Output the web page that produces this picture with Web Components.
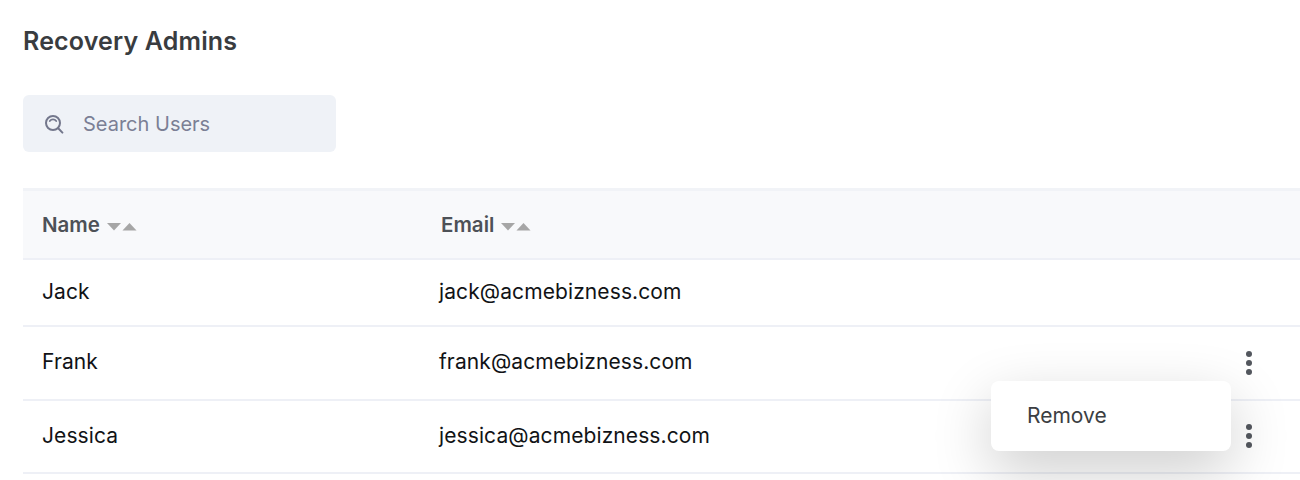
<!DOCTYPE html>
<html lang="en">
<head>
<meta charset="utf-8">
<title>Recovery Admins</title>
<style>
  html, body { margin: 0; background: #fff; overflow: hidden; }
  body { font-family: Inter, "Liberation Sans", sans-serif; height: 480px; }
</style>
</head>
<body>
<admins-page>
  <admin-row name="Jack" email="jack@acmebizness.com" height="67"></admin-row>
  <admin-row name="Frank" email="frank@acmebizness.com" height="74" more open></admin-row>
  <admin-row name="Jessica" email="jessica@acmebizness.com" height="73" more></admin-row>
</admins-page>

<script>
const pageTemplate = document.createElement('template');
pageTemplate.innerHTML = `
  <style>
    :host { display: block; padding: 26px 0 0 23px; }
    h1 {
      margin: 0;
      font-size: 25px;
      line-height: 30px;
      letter-spacing: .15px;
      font-weight: 600;
      color: #393c40;
    }
    search-box { margin-top: 39px; }
    .table { margin-top: 36px; }
    .head {
      display: grid;
      grid-template-columns: 418px 1fr;
      height: 67px;
      align-items: center;
      background: #f8f9fb;
      border-top: 3px solid #f1f3f7;
      border-bottom: 2px solid #eef0f6;
      color: #4d5157;
      font-size: 20.500px;
      font-weight: 600;
    }
    sort-head:first-child { padding-left: 19px; }
  </style>
  <h1>Recovery Admins</h1>
  <search-box placeholder="Search Users"></search-box>
  <div class="table">
    <div class="head">
      <sort-head>Name</sort-head>
      <sort-head>Email</sort-head>
    </div>
    <slot></slot>
  </div>
`;

class AdminsPage extends HTMLElement {
  constructor () {
    super();
    this.attachShadow({ mode: 'open' });
    this.shadowRoot.appendChild(pageTemplate.content.cloneNode(true));
  }
}

const searchTemplate = document.createElement('template');
searchTemplate.innerHTML = `
  <style>
    :host {
      display: flex;
      align-items: center;
      box-sizing: border-box;
      width: 313px;
      height: 57px;
      padding-left: 21px;
      gap: 19px;
      background: #eff2f7;
      border-radius: 6px;
      color: #7b7f95;
      font-size: 20px;
    }
    svg { display: block; flex: none; }
  </style>
  <svg width="20" height="20" viewBox="0 0 20 20" fill="none" stroke="#73778c" stroke-width="2" stroke-linecap="round">
    <circle cx="9" cy="9" r="7"/>
    <path d="M5.800 7a4 4 0 0 1 6.400 0" stroke-width="1.800"/>
    <path d="M14.200 14.200 18.400 18.600"/>
  </svg>
  <span class="label"></span>
`;

class SearchBox extends HTMLElement {
  constructor () {
    super();
    this.attachShadow({ mode: 'open' });
    this.shadowRoot.appendChild(searchTemplate.content.cloneNode(true));
    this.shadowRoot.querySelector('.label').textContent = this.getAttribute('placeholder');
  }
}

const sortTemplate = document.createElement('template');
sortTemplate.innerHTML = `
  <style>
    :host { display: flex; align-items: center; gap: 7px; }
    svg { display: block; margin-top: 3px; }
  </style>
  <slot></slot>
  <svg width="30" height="9" viewBox="0 0 30 9" fill="#a6a6a6">
    <path d="M0 1h14L7 8.500z"/>
    <path d="M15.500 8.500h14L22.500 1z"/>
  </svg>
`;

class SortHead extends HTMLElement {
  constructor () {
    super();
    this.attachShadow({ mode: 'open' });
    this.shadowRoot.appendChild(sortTemplate.content.cloneNode(true));
  }
}

const rowTemplate = document.createElement('template');
rowTemplate.innerHTML = `
  <style>
    :host {
      display: grid;
      grid-template-columns: 416px 1fr 46px 9px;
      align-items: center;
      position: relative;
      box-sizing: border-box;
      border-bottom: 2px solid #eef0f6;
      color: #111316;
      font-size: 21px;
    }
    .name { padding-left: 19px; }
    .name, .email { padding-bottom: 3px; letter-spacing: .1px; }
    svg { display: block; margin-top: -1px; }
    .menu {
      display: none;
      position: absolute;
      z-index: 2;
      top: 54px;
      right: 69px;
      box-sizing: border-box;
      width: 240px;
      height: 70px;
      padding-left: 36px;
      line-height: 70px;
      background: #fff;
      border-radius: 8px;
      color: #3b3e42;
      box-shadow: 0 20px 60px rgba(0, 0, 0, .2);
    }
    :host([open]) .menu { display: block; }
  </style>
  <span class="name"></span>
  <span class="email"></span>
  <svg class="more" width="8" height="26" viewBox="0 0 8 26" fill="#53575e">
    <circle cx="4" cy="4" r="3"/>
    <circle cx="4" cy="13" r="3"/>
    <circle cx="4" cy="22" r="3"/>
  </svg>
  <div class="menu">Remove</div>
`;

class AdminRow extends HTMLElement {
  constructor () {
    super();
    this.attachShadow({ mode: 'open' });
    this.shadowRoot.appendChild(rowTemplate.content.cloneNode(true));
    this.shadowRoot.querySelector('.name').textContent = this.getAttribute('name');
    this.shadowRoot.querySelector('.email').textContent = this.getAttribute('email');
    this.style.height = this.getAttribute('height') + 'px';
    if (!this.hasAttribute('more')) {
      this.shadowRoot.querySelector('.more').style.visibility = 'hidden';
    }
  }
}

customElements.define('admins-page', AdminsPage);
customElements.define('search-box', SearchBox);
customElements.define('sort-head', SortHead);
customElements.define('admin-row', AdminRow);
</script>
</body>
</html>
